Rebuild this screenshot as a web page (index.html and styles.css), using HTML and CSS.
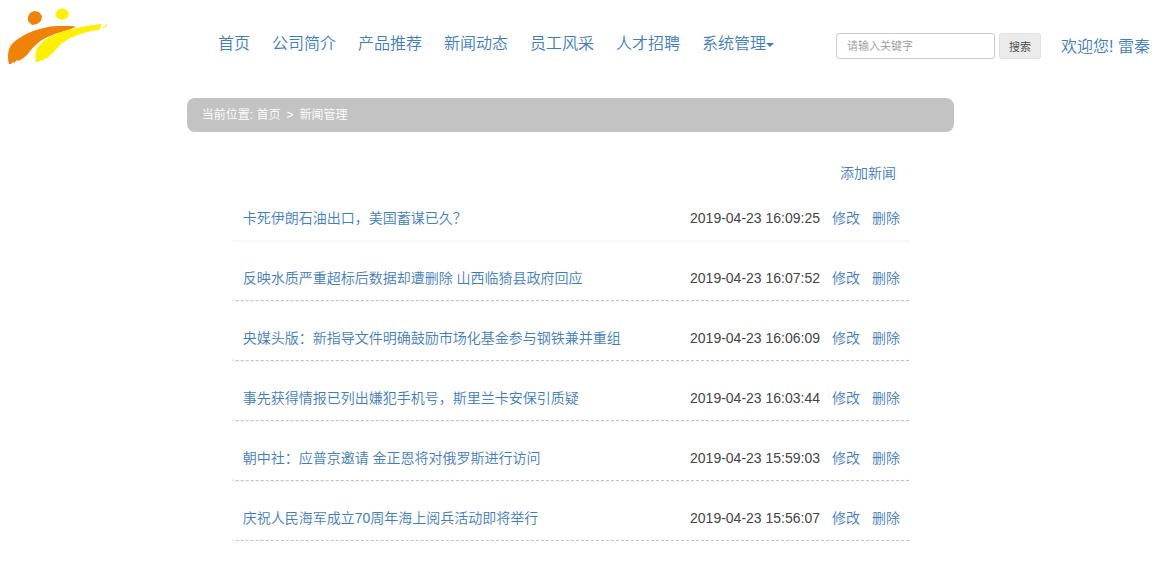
FILE: index.html
```html
<!DOCTYPE html>
<html lang="zh-CN">
<head>
<meta charset="utf-8">
<meta name="viewport" content="width=device-width, initial-scale=1">
<title>新闻管理</title>
<link rel="stylesheet" href="styles.css">
</head>
<body>
<header class="site-header">
  <div class="brand">
    <svg class="logo" viewBox="0 0 112 72" role="img" aria-label="公司标志">
      <g fill="#ef8207">
        <path d="M28 17l2-4 4-2 5 1 3 4-1 5-4 3-5 1-4-4z"/>
        <path d="M9 64c-2-9-1-17 5-22 11-9 26-15 43-16l15 0 4 1-8 3C57 33 45 37 38 43c-5 4-8 8-11 12l-5 4-4 2-1-1-3 3-1-1-2 2z"/>
      </g>
      <g fill="#fff000">
        <path d="M55 14l3-4 4-2 5 2 2 4-2 4-5 2-5-2z"/>
        <path d="M36 62c-1-5-1-11 2-15 6-9 20-15 34-18l15-3 14-2 1 1-2 1 1 1-2 3-8 1C78 34 66 39 59 46l-6 7-6 5-3 1-1 2-2-1-3 2z"/>
        <path d="M103 27l5-3-2 3-4 1z"/>
      </g>
    </svg>
  </div>
  <nav class="main-nav" aria-label="主导航">
    <a href="#">首页</a>
    <a href="#">公司简介</a>
    <a href="#">产品推荐</a>
    <a href="#">新闻动态</a>
    <a href="#">员工风采</a>
    <a href="#">人才招聘</a>
    <a href="#" class="has-menu">系统管理<span class="caret"></span></a>
  </nav>
  <form class="search">
    <input class="search-input" type="text" placeholder="请输入关键字" aria-label="关键字">
    <button class="search-button" type="submit">搜索</button>
  </form>
  <a class="welcome" href="#">欢迎您! 雷秦</a>
</header>
<main class="content">
  <nav class="breadcrumb" aria-label="当前位置">
    <span>当前位置: <a href="#">首页</a></span>
    <span>&gt;</span>
    <span>新闻管理</span>
  </nav>
  <section class="news">
    <a class="add-link" href="#">添加新闻</a>
    <ul class="news-list">
      <li class="news-item"><a class="title" href="#">卡死伊朗石油出口，美国蓄谋已久？</a><time>2019-04-23 16:09:25</time><a href="#">修改</a><a href="#">删除</a></li>
      <li class="news-item"><a class="title" href="#">反映水质严重超标后数据却遭删除 山西临猗县政府回应</a><time>2019-04-23 16:07:52</time><a href="#">修改</a><a href="#">删除</a></li>
      <li class="news-item"><a class="title" href="#">央媒头版：新指导文件明确鼓励市场化基金参与钢铁兼并重组</a><time>2019-04-23 16:06:09</time><a href="#">修改</a><a href="#">删除</a></li>
      <li class="news-item"><a class="title" href="#">事先获得情报已列出嫌犯手机号，斯里兰卡安保引质疑</a><time>2019-04-23 16:03:44</time><a href="#">修改</a><a href="#">删除</a></li>
      <li class="news-item"><a class="title" href="#">朝中社：应普京邀请 金正恩将对俄罗斯进行访问</a><time>2019-04-23 15:59:03</time><a href="#">修改</a><a href="#">删除</a></li>
      <li class="news-item"><a class="title" href="#">庆祝人民海军成立70周年海上阅兵活动即将举行</a><time>2019-04-23 15:56:07</time><a href="#">修改</a><a href="#">删除</a></li>
    </ul>
  </section>
</main>
</body>
</html>
```
FILE: styles.css
```css
* {
  box-sizing: border-box;
}

body {
  margin: 0;
  background: #fff;
  color: #444;
  font-family: "Liberation Sans", "Noto Sans CJK SC", sans-serif;
  font-size: 14px;
  font-weight: 350;
  line-height: 20px;
}

a {
  color: #3f7dbd;
  text-decoration: none;
}

.site-header {
  display: flex;
  align-items: flex-start;
  padding-right: 17px;
  height: 98px;
}

.brand {
  flex: 0 1 218px;
}

.logo {
  display: block;
  width: 112px;
  height: 72px;
}

.main-nav {
  display: flex;
  gap: 22px;
  padding-top: 34px;
  font-size: 16px;
  white-space: nowrap;
}

.has-menu {
  display: flex;
  align-items: center;
}

.caret {
  margin-top: 2px;
  border: 4px solid transparent;
  border-top-color: currentColor;
  border-bottom: 0;
}

.search {
  display: flex;
  gap: 4px;
  margin-left: auto;
  padding-top: 33px;
}

.search-input,
.search-button {
  height: 26px;
  border-radius: 3px;
  font-family: inherit;
  font-size: 11px;
  font-weight: inherit;
}

.search-input {
  width: 159px;
  padding: 0 10px;
  border: 1px solid #ccc;
  color: #555;
}

.search-input::placeholder {
  color: #999;
}

.search-button {
  padding: 0 9px;
  border: 1px solid #e0e0e0;
  background: #ebebeb;
  color: #444;
}

.welcome {
  margin-left: 20px;
  padding-top: 37px;
  font-size: 16px;
  white-space: nowrap;
}

.content {
  margin: 0 18.25% 0 16%;
}

.breadcrumb {
  display: flex;
  gap: 6px;
  padding: 7px 15px;
  border-radius: 8px;
  background: #c3c3c3;
  color: #fff;
  font-size: 12px;
}

.breadcrumb a {
  color: inherit;
}

.news {
  display: flex;
  flex-direction: column;
  padding: 31px 43px 0 45px;
}

.add-link {
  align-self: flex-end;
  margin-right: 15px;
}

.news-list {
  display: grid;
  gap: 16px;
  margin: 14px 0 0;
  padding: 0;
  list-style: none;
}

.news-item {
  display: flex;
  gap: 12px;
  padding: 11px 11px 12px;
  border-bottom: 1px dashed #c4c4c4;
  border-radius: 2px;
  box-shadow: 0 1px 1px rgba(0, 0, 0, 0.04);
}

.news-item:first-child {
  border-bottom: 1px solid #f8f8f8;
}

.title {
  flex: 1;
}
```
